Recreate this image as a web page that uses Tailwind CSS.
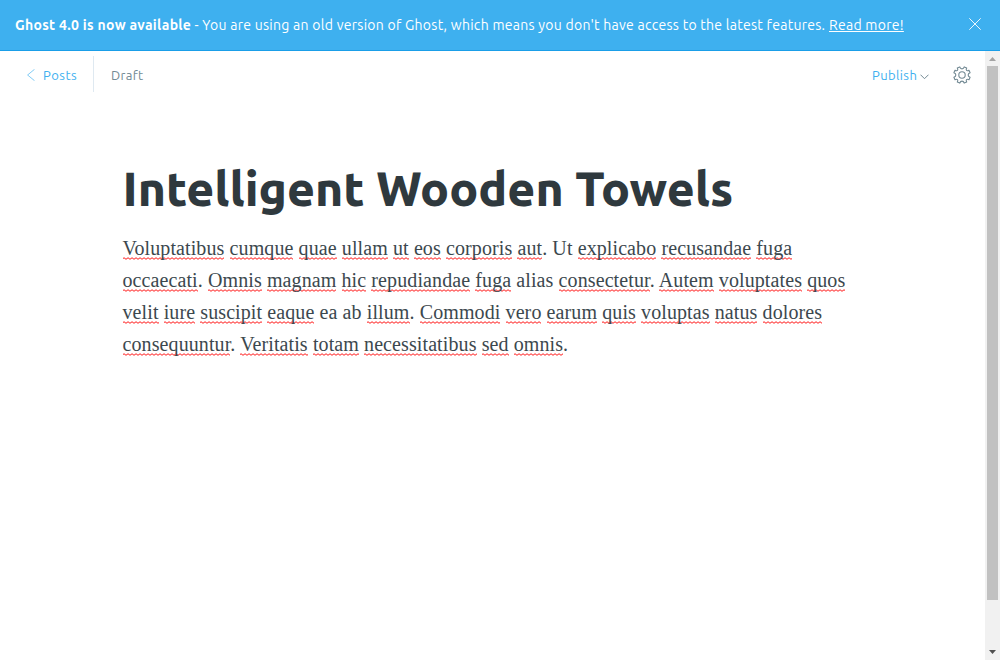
<!DOCTYPE html>
<html lang="en">
<head>
<meta charset="utf-8">
<title>Editor - Ghost</title>
<script src="https://cdn.jsdelivr.net/npm/@tailwindcss/browser@4"></script>
</head>
<body class="h-[660px] overflow-hidden bg-white flex flex-col font-[Ubuntu,'Noto_Sans',sans-serif] [&_u]:no-underline [&_u]:bg-[url('data:image/svg+xml,%3Csvg%20xmlns=%22http://www.w3.org/2000/svg%22%20width=%224%22%20height=%223%22%3E%3Cpath%20d=%22M-1%202.5L1%20.7L3%202.3L5%20.7%22%20fill=%22none%22%20stroke=%22red%22%20stroke-width=%22.9%22/%3E%3C/svg%3E')] [&_u]:bg-repeat-x [&_u]:bg-bottom-left [&_u]:pb-px">
<aside class="h-[51px] shrink-0 bg-[#3eb0ef] border-b border-[#1a9ee8] flex items-center justify-between pl-[15px] pr-[19px] text-white text-[14px] whitespace-nowrap">
  <p class="flex pt-px tracking-[0.27px]"><b class="w-[179.5px] tracking-[0.3px]">Ghost 4.0 is now available</b><span class="w-[634.5px]">- You are using an old version of Ghost, which means you don't have access to the latest features.</span><a class="underline">Read more!</a></p>
  <svg class="size-3 mb-[3px]" viewBox="0 0 12 12" fill="none" stroke="#fff" stroke-width=".9"><path d="M.3.3l11.4 11.4M11.7.3L.3 11.7"/></svg>
</aside>
<div class="flex flex-1 min-h-0">
  <main class="flex-1 flex flex-col">
    <header class="h-[48px] flex items-center pl-[27px] pr-[14px] text-[13px] tracking-[0.4px]">
      <svg class="w-2 h-3 mr-2" viewBox="0 0 8 12" fill="none" stroke="#3eb0ef" stroke-width=".65"><path d="M7.5.3L.6 6l6.9 5.7"/></svg>
      <a class="text-[#3eb0ef] w-[50px] pt-[2px] tracking-[0.5px]">Posts</a>
      <div class="border-l border-[#dfe9f1] h-9 mb-[2px] w-[18px]"></div>
      <span class="text-[#738a94] pt-[2px] tracking-[0.3px]">Draft</span>
      <a class="text-[#3eb0ef] ml-auto w-[47.5px] pt-[2px]">Publish</a>
      <svg class="w-[9px] h-[6px] mt-[3px] mr-[24.500px]" viewBox="0 0 9 6" fill="none" stroke="#738a94" stroke-width="1"><path d="M.5.7l4 4 4-4"/></svg>
      <svg class="size-[18px]" viewBox="0 0 18 18" fill="none" stroke="#738a94" stroke-width="1.1"><circle cx="9" cy="9" r="3.2"/><path stroke-linejoin="round" d="M6.800 .900C7.500 3.500 10.500 3.500 11.200 .900L13.700 2C12.500 4.300 13.700 5.500 16 4.300L17.100 6.800C14.500 7.500 14.500 10.500 17.100 11.200L16 13.700C13.700 12.500 12.500 13.700 13.700 16L11.200 17.100C10.500 14.500 7.500 14.500 6.800 17.100L4.300 16C5.500 13.700 4.300 12.500 2 13.700L.900 11.200C3.500 10.500 3.500 7.500 .900 6.800L2 4.300C4.300 5.500 5.500 4.300 4.300 2z"/></svg>
    </header>
    <article class="pl-[122.5px] pt-[57px] text-[#2f393e]">
      <h1 class="text-[48px] leading-[64px] font-extrabold whitespace-nowrap">Intelligent Wooden Towels</h1>
      <p class="mt-[12px] text-[20px] leading-8 tracking-[0.1px] font-['Liberation_Serif',serif] text-[#3c484e] whitespace-nowrap"><u>Voluptatibus</u> <u>cumque</u> <u>quae</u> <u>ullam</u> <u>ut</u> <u>eos</u> <u>corporis</u> <u>aut</u>. Ut <u>explicabo</u> <u>recusandae</u> <u>fuga</u><br><u>occaecati</u>. <u>Omnis</u> <u>magnam</u> <u>hic</u> <u>repudiandae</u> <u>fuga</u> alias <u>consectetur</u>. <u>Autem</u> <u>voluptates</u> <u>quos</u><br><u>velit</u> <u>iure</u> <u>suscipit</u> <u>eaque</u> ea ab <u>illum</u>. <u>Commodi</u> <u>vero</u> <u>earum</u> <u>quis</u> <u>voluptas</u> <u>natus</u> <u>dolores</u><br><u>consequuntur</u>. <u>Veritatis</u> <u>totam</u> <u>necessitatibus</u> <u>sed</u> <u>omnis</u>.</p>
    </article>
  </main>
  <div class="w-[15px] bg-[#f1f1f1] flex flex-col items-center pt-[6px]">
    <svg class="w-[7px] h-1 shrink-0" viewBox="0 0 7 4" fill="#a3a3a3"><path d="M0 4L3.500 0L7 4z"/></svg>
    <div class="w-[11px] h-[534px] mt-[5px] shrink-0 bg-[#c1c1c1]"></div>
    <svg class="w-[7px] h-1 mt-[50px] shrink-0" viewBox="0 0 7 4" fill="#505050"><path d="M0 0L3.500 4L7 0z"/></svg>
  </div>
</div>
</body>
</html>
